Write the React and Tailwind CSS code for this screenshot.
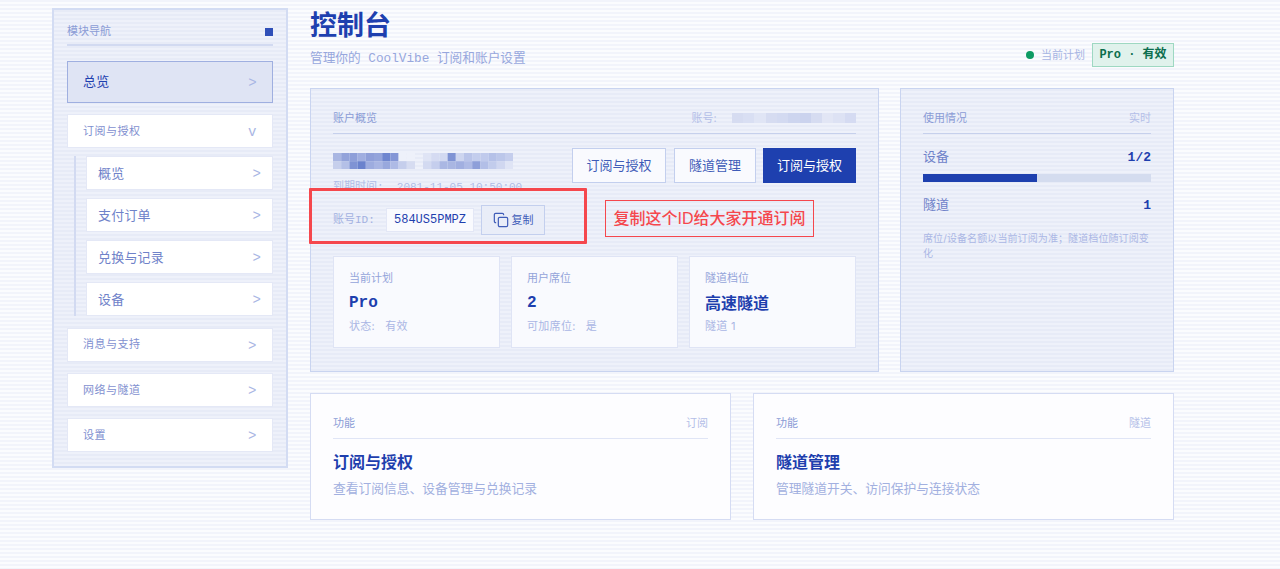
import React from 'react';
import { Copy } from 'lucide-react';

const MONO = 'font-["Liberation_Mono","Noto_Sans_CJK_SC",monospace]';
const PAGE_BG = 'bg-[repeating-linear-gradient(180deg,#f2f4fb_0px,#f2f4fb_2px,#fbfcfe_2px,#fbfcfe_4px)]';
const PANEL_BG = 'bg-[repeating-linear-gradient(180deg,#e7ebf7_0px,#e7ebf7_2px,#eef1fa_2px,#eef1fa_4px)]';

// 账户名打码色块
const NAME_LEFT = [
  ['#a9b6e2', '#93a3da', '#8e9fd9', '#a0aee0', '#8f9fd9', '#94a4db', '#6f86cf', '#8496d6', '#eef1fa', '#eef1fa'],
  ['#c6cfec', '#b4c0e7', '#7f93d4', '#6a82cd', '#9dacdf', '#a8b5e3', '#98a8dd', '#aebae5', '#c5ceec', '#d6dcf1'],
];
const NAME_RIGHT = [
  ['#dfe4f5', '#d5dbf2', '#d2d9f1', '#7f93d4', '#cdd5ef', '#b9c4e9', '#c3cded', '#c0caec', '#b5c1e8', '#bcc7ea', '#c5ceed'],
  ['#d3daf1', '#c5ceed', '#aab7e3', '#a9b6e2', '#a1afe0', '#aebae5', '#8e9fd9', '#b3bfe7', '#c2ccec', '#d0d7f0', '#dfe4f5'],
];
const ACCOUNT_BLUR = ['#d6dcf1', '#d9dff3', '#e0e5f5', '#d6dcf1', '#d3daf1', '#cdd5ef', '#cbd3ee', '#d6dcf1', '#e2e6f5', '#dde2f4', '#d5dbf2'];

const Mosaic = ({ rows, cell }) => (
  <svg width={rows[0].length * cell} height={rows.length * cell} className="block shrink-0 blur-[0.5px]">
    {rows.map((row, y) =>
      row.map((c, x) => <rect key={x + '-' + y} x={x * cell} y={y * cell} width={cell} height={cell} fill={c} />)
    )}
  </svg>
);

const NavItem = ({ label, mark = '>', small, active }) => (
  <div
    className={`flex items-center justify-between border ${
      active
        ? 'h-[42px] border-[#9fafe0] bg-[#dfe4f4] px-[15px] text-[13px] tracking-[0.3px] text-[#1e40af]'
        : `h-[34px] border-[#e4e8f6] bg-white ${small ? 'px-[15px] text-[11px] tracking-[0.5px] text-[#7f90d0]' : 'px-[11px] text-[13px] tracking-[0.2px] text-[#6f82c9]'}`
    }`}
  >
    <span>{label}</span>
    <span className={`pt-[3px] text-[14px] text-[#a9b6e4] ${MONO}`}>{mark}</span>
  </div>
);

const PanelHeader = ({ left, right, line = 'border-[#c6d0ec]' }) => (
  <div className={`flex h-[30px] items-center justify-between border-b ${line} pb-[1px] text-[11px]`}>
    <span className="text-[#8b9cd6]">{left}</span>
    {right}
  </div>
);

const Stat = ({ label, value, sub, mono }) => (
  <div className="flex h-[92px] flex-1 flex-col border border-[#dfe4f5] bg-[#f9fafe] pl-[15px] pt-[13px]">
    <span className="text-[11px] leading-[16px] text-[#94a4da]">{label}</span>
    <span className={`mt-[5px] text-[16px] leading-[24px] font-bold text-[#1e3fae] ${mono ? MONO : ''}`}>{value}</span>
    <span className="mt-[3px] text-[11px] leading-[16px] tracking-[0.3px] whitespace-pre text-[#aab6e4]">{sub}</span>
  </div>
);

const ActionBtn = ({ label, w, primary }) => (
  <button
    className={`flex h-[35px] items-center justify-center border text-[13px] ${w} ${
      primary ? 'border-[#1e40af] bg-[#1e40af] text-white' : 'border-[#c3cfee] bg-[#f9fafe] text-[#3f5cb8]'
    }`}
  >
    {label}
  </button>
);

const FeatureCard = ({ tag, title, desc }) => (
  <div className="h-[127px] flex-1 border border-[#d5dcf3] bg-[#fdfdff] px-[22px] pt-[15px]">
    <PanelHeader left="功能" right={<span className="text-[#b4bfe8]">{tag}</span>} line="border-[#e0e5f6]" />
    <div className="mt-[11px] text-[16px] leading-[24px] font-bold text-[#1e3fae]">{title}</div>
    <div className="mt-[5px] text-[12.75px] leading-[20px] text-[#a2b0e0]">{desc}</div>
  </div>
);

export default function App() {
  return (
    <div className={`relative flex h-[569px] w-[1280px] items-start overflow-hidden pl-[52px] font-["Inter","Noto_Sans_CJK_SC",sans-serif] ${PAGE_BG}`}>
      {/* 侧栏 */}
      <aside className={`mt-[8px] h-[460px] w-[236px] shrink-0 border-2 border-[#d3dcf3] px-[13px] ${PANEL_BG}`}>
        <div className="flex h-[36px] items-center justify-between border-b-2 border-[#d2daf1] pt-[9px] text-[11px] text-[#8b9cd6]">
          <span>模块导航</span>
          <span className="h-[8px] w-[8px] bg-[#2f4fb8]" />
        </div>
        <nav className="mt-[15px] flex flex-col gap-[11.3px]">
          <NavItem label="总览" active />
          <div>
            <NavItem label="订阅与授权" mark="v" small />
            <div className="mt-[8px] ml-[7px] flex flex-col gap-[8px] border-l-2 border-[#d2daf1] pl-[10px]">
              <NavItem label="概览" />
              <NavItem label="支付订单" />
              <NavItem label="兑换与记录" />
              <NavItem label="设备" />
            </div>
          </div>
          <NavItem label="消息与支持" small />
          <NavItem label="网络与隧道" small />
          <NavItem label="设置" small />
        </nav>
      </aside>

      {/* 主内容 */}
      <main className="ml-[22px] w-[864px] shrink-0">
        <div className="flex h-[88px] items-start justify-between">
          <div>
            <h1 className="mt-[8px] text-[27px] leading-[36px] font-bold text-[#1e40af]">控制台</h1>
            <p className={`mt-[6px] text-[12.7px] leading-[18px] text-[#97a7dd] ${MONO}`}>管理你的 CoolVibe 订阅和账户设置</p>
          </div>
          <div className="mt-[43px] flex items-center">
            <span className="h-[8px] w-[8px] rounded-full bg-[#0e9b63]" />
            <span className="ml-[7px] text-[11px] text-[#a7b4e3]">当前计划</span>
            <span className={`ml-[7px] flex h-[24px] w-[82px] items-center justify-center border border-[#9ed8c2] bg-[#e0f2ec] text-[12px] font-bold whitespace-pre text-[#0c6e4e] ${MONO}`}>Pro · 有效</span>
          </div>
        </div>

        <div className="flex gap-[21px]">
          {/* 账户概览 */}
          <section className={`h-[284px] w-[569px] border border-[#c9d4f0] px-[22px] pt-[15px] ${PANEL_BG}`}>
            <PanelHeader
              left="账户概览"
              right={
                <span className="flex items-center text-[#b4bfe8]">
                  账号:
                  <span className="ml-[15px] flex">
                    {ACCOUNT_BLUR.map((c, i) => (
                      <span key={i} className="h-[10px] w-[11.3px]" style={{ backgroundColor: c }} />
                    ))}
                  </span>
                </span>
              }
            />
            <div className="mt-[14px] flex justify-between">
              <div className="w-[239px]">
                <div className="mt-[5px] flex h-[16px] gap-[8px]">
                  <Mosaic rows={NAME_LEFT} cell={8.2} />
                  <Mosaic rows={NAME_RIGHT} cell={8.2} />
                </div>
                <div className={`mt-[10px] text-[11px] leading-[16px] whitespace-pre text-[#b0bce6] ${MONO}`}>到期时间:  2081-11-05 10:50:00</div>
                <div className="mt-[10px] flex h-[30px] items-center">
                  <span className={`w-[53px] text-[11px] text-[#a3b1e1] ${MONO}`}>账号ID:</span>
                  <span className={`flex h-[24px] w-[88px] items-center justify-center border border-[#e3e7f6] bg-[#f9fafe] text-[12px] text-[#1e3fae] ${MONO}`}>584US5PMPZ</span>
                  <button className="ml-[7px] flex h-[30px] w-[64px] shrink-0 items-center justify-center gap-[3px] border border-[#c3cfee] bg-[#e9edf8] text-[11px] text-[#3f5cb8]">
                    <Copy size={16} strokeWidth={1.8} />
                    复制
                  </button>
                </div>
              </div>
              <div className="flex">
                <ActionBtn label="订阅与授权" w="w-[94px] mr-[8px]" />
                <ActionBtn label="隧道管理" w="w-[82px] mr-[7px]" />
                <ActionBtn label="订阅与授权" w="w-[93px]" primary />
              </div>
            </div>
            <div className="mt-[21px] flex gap-[11px]">
              <Stat label="当前计划" value="Pro" sub="状态:   有效" mono />
              <Stat label="用户席位" value="2" sub="可加席位:   是" mono />
              <Stat label="隧道档位" value="高速隧道" sub="隧道 1" />
            </div>
          </section>

          {/* 使用情况 */}
          <section className={`h-[284px] w-[274px] border border-[#c9d4f0] px-[22px] pt-[15px] ${PANEL_BG}`}>
            <PanelHeader left="使用情况" right={<span className="text-[#b4bfe8]">实时</span>} />
            <div className={`mt-[13px] flex h-[22px] items-center justify-between text-[13px] font-bold text-[#1e3fae] ${MONO}`}>
              <span className="font-normal text-[#6f82c9]">设备</span>
              <span>1/2</span>
            </div>
            <div className="mt-[5px] h-[8px] bg-[#d4dcef]">
              <div className="h-full w-[50%] bg-[#1e40af]" />
            </div>
            <div className={`mt-[13px] flex h-[22px] items-center justify-between text-[13px] font-bold text-[#1e3fae] ${MONO}`}>
              <span className="font-normal text-[#6f82c9]">隧道</span>
              <span>1</span>
            </div>
            <p className="mt-[14px] text-[10px] leading-[15px] tracking-[0.1px] text-[#abb7e5]">席位/设备名额以当前订阅为准；隧道档位随订阅变化</p>
          </section>
        </div>

        <div className="mt-[21px] flex gap-[22px]">
          <FeatureCard tag="订阅" title="订阅与授权" desc="查看订阅信息、设备管理与兑换记录" />
          <FeatureCard tag="隧道" title="隧道管理" desc="管理隧道开关、访问保护与连接状态" />
        </div>
      </main>

      {/* 截图上的红色标注 */}
      <div className="absolute top-[188px] left-[309px] h-[56px] w-[278px] rounded-[1px] border-[3px] border-[#f5474d]" />
      <div className='absolute top-[200px] left-[605px] flex h-[37px] w-[209px] items-center justify-center border border-[#f5474d] font-["Liberation_Sans","Noto_Sans_CJK_SC",sans-serif] text-[16px] font-medium text-[#f5474d]'>
        复制这个ID给大家开通订阅
      </div>
    </div>
  );
}
